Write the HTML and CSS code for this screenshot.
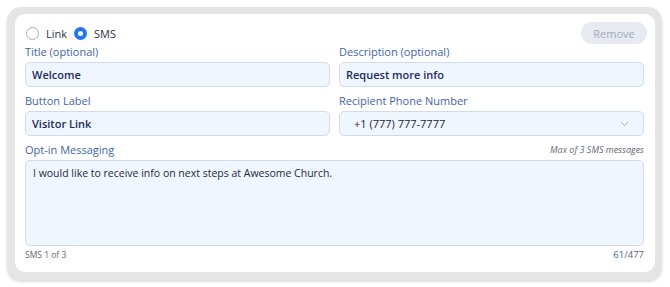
FILE: index.html
```html
<!DOCTYPE html>
<html>
<head>
    <title>SMS Step</title>
    <meta charset="UTF-8">
    <meta name="viewport" content="width=device-width, initial-scale=1.0">
    <link rel="stylesheet" href="styles.css">
</head>
<body>
    <div class="frame">
        <div class="card">
            <div class="card-head">
                <div class="mode">
                    <label class="radio"><span class="dot"></span>Link</label>
                    <label class="radio checked"><span class="dot"></span>SMS</label>
                </div>
                <button class="remove">Remove</button>
            </div>

            <div class="fields">
                <div class="field">
                    <div class="label">Title (optional)</div>
                    <div class="input">Welcome</div>
                </div>
                <div class="field">
                    <div class="label">Description (optional)</div>
                    <div class="input">Request more info</div>
                </div>
                <div class="field">
                    <div class="label">Button Label</div>
                    <div class="input">Visitor Link</div>
                </div>
                <div class="field">
                    <div class="label">Recipient Phone Number</div>
                    <div class="input select">
                        <span>+1 (777) 777-7777</span>
                        <svg width="9" height="6" viewBox="0 0 9 6"><path d="M1 1l3.5 3.5L8 1" fill="none" stroke="#a3acbd" stroke-width="1"/></svg>
                    </div>
                </div>
                <div class="field wide">
                    <div class="label-row">
                        <div class="label">Opt-in Messaging</div>
                        <div class="hint">Max of 3 SMS messages</div>
                    </div>
                    <div class="textarea">I would like to receive info on next steps at Awesome Church.</div>
                    <div class="counter">
                        <span>SMS 1 of 3</span>
                        <span><b>61</b>/477</span>
                    </div>
                </div>
            </div>
        </div>
    </div>
</body>
</html>
```

FILE: styles.css
```css
body {
    margin: 0;
    padding: 7px 8px 7px 7px;
    font-family: "Open Sans", Arial, sans-serif;
    background: #fff;
}
.frame {
    background: #e5e5e5;
    border-radius: 14px;
    padding: 7px 7px 8px 8px;
    box-shadow: 0 2px 3px rgba(0, 0, 0, 0.14);
}
.card {
    background: #fff;
    border-radius: 10px;
    padding: 8px 11px 9px 10px;
    height: 241px;
}
.card-head {
    display: flex;
    justify-content: space-between;
    align-items: center;
    height: 22px;
}
.mode {
    display: flex;
    gap: 7px;
    padding-left: 1px;
}
.radio {
    display: flex;
    align-items: center;
    gap: 7px;
    font-size: 11px;
    color: #2b3447;
}
.dot {
    width: 11px;
    height: 11px;
    border-radius: 50%;
    border: 1px solid #a9adb6;
    box-sizing: content-box;
}
.radio.checked .dot {
    width: 5px;
    height: 5px;
    border: 4px solid #1f78f0;
    background: #fff;
}
.remove {
    font-family: inherit;
    font-size: 11px;
    color: #a2aab8;
    background: #e7eaf0;
    border: none;
    border-radius: 11px;
    height: 22px;
    width: 66px;
    margin-right: -3px;
}
.fields {
    display: grid;
    grid-template-columns: 1fr 1fr;
    column-gap: 9px;
    row-gap: 7px;
    margin-top: 1px;
}
.wide {
    grid-column: 1 / 3;
}
.label {
    font-size: 11px;
    line-height: 14px;
    color: #4563a4;
    margin-bottom: 3px;
}
.label-row {
    display: flex;
    justify-content: space-between;
}
.hint {
    font-size: 9px;
    font-style: italic;
    color: #5f6573;
    line-height: 14px;
}
.input {
    height: 25px;
    box-sizing: border-box;
    border: 1px solid #d3dbe8;
    border-radius: 5px;
    background: #f0f6ff;
    padding: 0 6px;
    display: flex;
    align-items: center;
    font-size: 11px;
    font-weight: 600;
    color: #1d2c5c;
}
.select {
    justify-content: space-between;
    padding: 0 14px 0 14px;
    font-weight: 400;
    color: #1d2433;
}
.textarea {
    height: 86px;
    box-sizing: border-box;
    border: 1px solid #d3dbe8;
    border-radius: 5px;
    background: #f0f6ff;
    padding: 5px 7px;
    font-size: 10.5px;
    color: #222a38;
}
.counter {
    display: flex;
    justify-content: space-between;
    font-size: 8.5px;
    color: #5f6573;
    margin-top: 3px;
    line-height: 12px;
}
.counter span:last-child {
    font-size: 9.5px;
}
.counter b {
    font-weight: 400;
    color: #3c63b8;
}
```
